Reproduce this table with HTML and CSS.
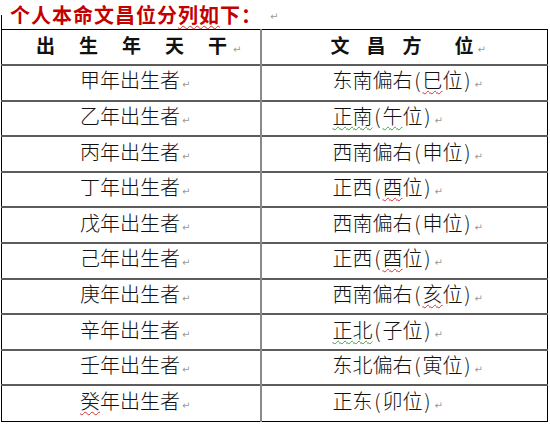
FILE: index.html
```html
<!DOCTYPE html>
<html lang="zh">
<head>
<meta charset="utf-8">
<link rel="stylesheet" href="styles.css">
</head>
<body>
<div class="title">
  <span class="mark"></span>
  <span class="title-text">个人本命文昌位分<span class="wavy red">列如</span>下：</span><span class="pm">↵</span>
</div>
<table class="tbl">
  <colgroup><col class="col1"><col class="col2"></colgroup>
  <tr class="head">
    <td class="c1"><span class="h1"><span>出</span><span>生</span><span>年</span><span>天</span><span>干</span></span><span class="pm">↵</span></td>
    <td class="c2"><span class="h2"><span>文</span><span>昌</span><span>方</span><span class="wide">位</span></span><span class="pm">↵</span></td>
  </tr>
  <tr><td class="c1">甲年出生者<span class="pm">↵</span></td><td class="c2">东南偏右<span class="p">(</span><span class="wavy red">巳</span>位<span class="p">)</span><span class="pm">↵</span></td></tr>
  <tr><td class="c1">乙年出生者<span class="pm">↵</span></td><td class="c2"><span class="wavy green">正南<span class="p">(</span>午</span>位<span class="p">)</span><span class="pm">↵</span></td></tr>
  <tr><td class="c1">丙年出生者<span class="pm">↵</span></td><td class="c2">西南偏右<span class="p">(</span>申位<span class="p">)</span><span class="pm">↵</span></td></tr>
  <tr><td class="c1">丁年出生者<span class="pm">↵</span></td><td class="c2">正西<span class="p">(</span><span class="wavy red">酉</span>位<span class="p">)</span><span class="pm">↵</span></td></tr>
  <tr><td class="c1">戊年出生者<span class="pm">↵</span></td><td class="c2">西南偏右<span class="p">(</span>申位<span class="p">)</span><span class="pm">↵</span></td></tr>
  <tr><td class="c1">己年出生者<span class="pm">↵</span></td><td class="c2">正西<span class="p">(</span><span class="wavy red">酉</span>位<span class="p">)</span><span class="pm">↵</span></td></tr>
  <tr><td class="c1">庚年出生者<span class="pm">↵</span></td><td class="c2">西南偏右<span class="p">(</span><span class="wavy red">亥</span>位<span class="p">)</span><span class="pm">↵</span></td></tr>
  <tr><td class="c1">辛年出生者<span class="pm">↵</span></td><td class="c2"><span class="wavy green">正北<span class="p">(</span></span>子位<span class="p">)</span><span class="pm">↵</span></td></tr>
  <tr><td class="c1">壬年出生者<span class="pm">↵</span></td><td class="c2">东北偏右<span class="p">(</span>寅位<span class="p">)</span><span class="pm">↵</span></td></tr>
  <tr><td class="c1"><span class="wavy red">癸</span>年出生者<span class="pm">↵</span></td><td class="c2">正东<span class="p">(</span>卯位<span class="p">)</span><span class="pm">↵</span></td></tr>
</table>
</body>
</html>
```

FILE: styles.css
```css
html, body {
  margin: 0;
  padding: 0;
  background: #ffffff;
}
body {
  width: 550px;
  height: 426px;
  overflow: hidden;
  font-family: "Noto Sans CJK SC", "Noto Sans", sans-serif;
  color: #111;
}
.title {
  display: flex;
  align-items: flex-end;
  height: 29px;
}
.mark {
  width: 1px;
  height: 14px;
  background: #000;
  margin-left: 1px;
}
.title-text {
  align-self: center;
  margin-left: 8px;
  font-size: 20px;
  line-height: 29px;
  font-weight: 700;
  letter-spacing: 1px;
  color: #c40000;
}
.title .pm {
  align-self: center;
  margin-left: 8px;
  margin-top: 4px;
}
.tbl {
  border-collapse: collapse;
  margin-left: 1px;
  width: 547px;
  table-layout: fixed;
  border: 1px solid #000;
}
.col1 {
  width: 259px;
}
.tbl td {
  box-sizing: border-box;
  height: 35.6px;
  padding: 0;
  border-top: 2px solid #5c5c5c;
  font-size: 20px;
  line-height: 24px;
  font-weight: 300;
  white-space: nowrap;
  vertical-align: middle;
  overflow: hidden;
}
.tbl tr:first-child td {
  border-top: 1px solid #000;
}
.tbl tr:last-child td {
  border-bottom: 1px solid #000;
}
.c1 {
  padding-left: 78px !important;
  border-right: 2px solid #8a8a8a;
}
.c2 {
  padding-left: 71px !important;
}
.head td {
  font-weight: 700;
  font-size: 19px;
}
.head .c1 {
  padding-left: 34px !important;
}
.head .c2 {
  padding-left: 69px !important;
}
.h1 span {
  display: inline-block;
  width: 19px;
  margin-right: 24px;
}
.h1 span:last-child {
  margin-right: 4px;
}
.h2 span {
  display: inline-block;
  width: 19px;
  margin-right: 17px;
}
.h2 span:nth-child(3) {
  margin-right: 33px;
}
.h2 span:last-child {
  margin-right: 2px;
}
.p {
  display: inline-block;
  width: 10px;
  text-align: center;
}
.pm {
  font-size: 10px;
  color: #9a9a9a;
  font-weight: 400;
  margin-left: 2px;
  font-family: "DejaVu Sans", sans-serif;
}
.wavy {
  text-decoration-line: underline;
  text-decoration-style: wavy;
  text-decoration-thickness: 1px;
  text-underline-offset: 2px;
}
.red {
  text-decoration-color: #d03030;
}
.green {
  text-decoration-color: #3aa03a;
}
```
